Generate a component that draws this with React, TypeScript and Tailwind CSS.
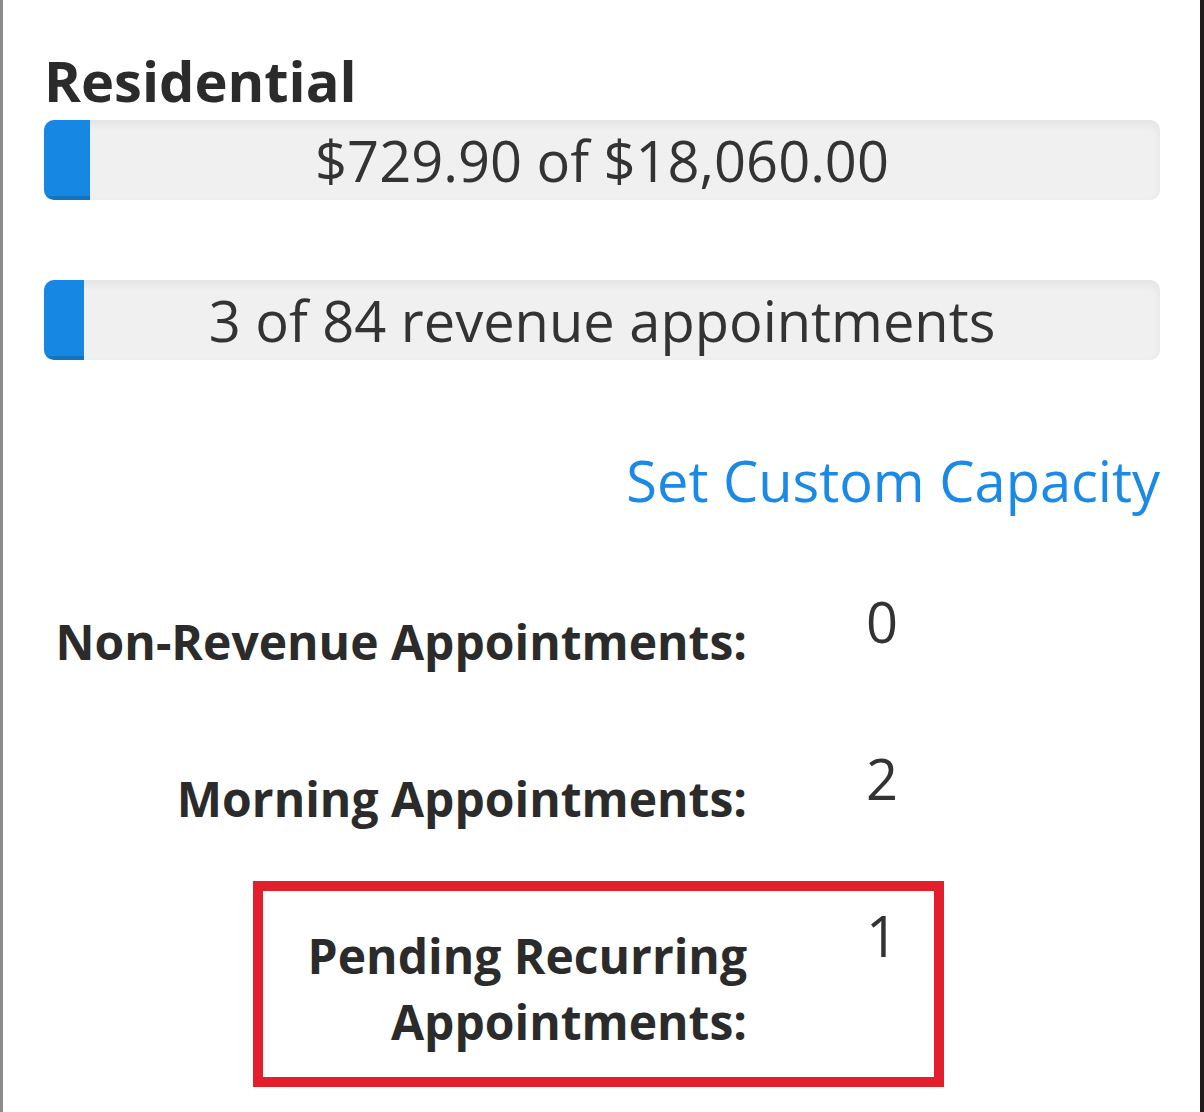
import React from 'react';

const Bar: React.FC<{ label: string; fill: number }> = ({ label, fill }) => (
  <div className="relative h-[80px] rounded-[10px] bg-[#f0f0f0] shadow-[inset_0_4px_8px_rgba(0,0,0,0.06)] overflow-hidden">
    <div
      className="absolute left-0 top-0 h-full bg-[#1688e3] shadow-[inset_0_-4px_0_rgba(0,0,0,0.15)]"
      style={{ width: fill }}
    />
    <div className="relative flex h-full items-center justify-center text-[56px] leading-[80px] text-[#333]">
      {label}
    </div>
  </div>
);

const Row: React.FC<{ label: string; value: string; highlight?: boolean }> = ({ label, value, highlight }) => (
  <div className="relative grid grid-cols-[703px_1fr] gap-x-[119px]">
    <div className="pt-[28px] text-right text-[48px] font-bold leading-[66px] text-[#2b2b2b]">{label}</div>
    <div className="text-[56px] leading-[80px] text-[#333]">{value}</div>
    {highlight && (
      <div className="absolute left-[209px] top-[-14px] h-[206px] w-[691px] border-[10px] border-[#e41f2d]" />
    )}
  </div>
);

const App: React.FC = () => {
  return (
    <div className="min-h-[1112px] w-[1204px] bg-white border-l-[3px] border-l-[#8c8c8c] border-r-[4px] border-r-[#221b1b] font-['Open_Sans',sans-serif]">
      <div className="pl-[41px] pr-[40px] pt-[52px]">
        <h2 className="text-[56px] font-bold leading-[56px] text-[#2b2b2b]">Residential</h2>
        <div className="mt-[12px]">
          <Bar label="$729.90 of $18,060.00" fill={46} />
        </div>
        <div className="mt-[80px]">
          <Bar label="3 of 84 revenue appointments" fill={40} />
        </div>
        <div className="mt-[80px] text-right text-[56px] leading-[80px] text-[#1a8ae6]">
          <a href="#" className="text-[#1a8ae6]">Set Custom Capacity</a>
        </div>
        <div className="mt-[61px] flex flex-col gap-y-[63px]">
          <Row label="Non-Revenue Appointments:" value="0" />
          <Row label="Morning Appointments:" value="2" />
          <Row label="Pending Recurring Appointments:" value="1" highlight />
        </div>
      </div>
    </div>
  );
};

export default App;
